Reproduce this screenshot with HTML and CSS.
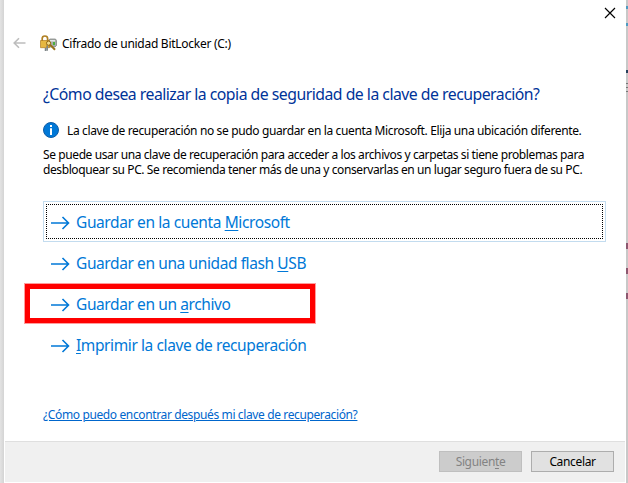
FILE: index.html
```
<!DOCTYPE html>
<html lang="es">
<head>
<meta charset="utf-8">
<title>Cifrado de unidad BitLocker (C:)</title>
<link rel="stylesheet" href="styles.css">
</head>
<body>
<main class="dialog">
  <header class="titlebar">
    <svg class="back" width="13" height="12" viewBox="0 0 13 12"><path d="M12.5 6H1.5M6 1.2 1.2 6 6 10.8" fill="none" stroke="#bdbdbd" stroke-width="1.6"/></svg>
    <svg class="lock" width="17" height="17" viewBox="0 0 17 17">
      <path d="M8 5.5 10 4h5.5l1 1.5v5L15 12H8z" fill="#a9adaa" stroke="#777c79" stroke-width=".7"/>
      <path d="M10 5h5v1.5h-5z" fill="#e2e5e4"/><path d="M13 7h2v3h-2z" fill="#4cae3e"/>
      <path d="M2.2 6V3.6Q2.2 1 4.9 1t2.7 2.6V6" fill="none" stroke="#b08125" stroke-width="1.7"/>
      <path d="M.5 5.5h9v7.2h-9z" fill="#dda72c" stroke="#a97315" stroke-width=".6"/>
      <path d="M1 7h7M1 9h5M1 11h5" stroke="#f6cf62" stroke-width=".8"/>
      <circle cx="8.6" cy="8.2" r="2.1" fill="#f4dc8a" stroke="#926613"/>
      <path d="m10 9.6 5 5.2" stroke="#987017" stroke-width="2"/>
      <path d="M7.2 10.5v5.3M5.5 13v3" stroke="#7d8587" stroke-width="1.5"/>
    </svg>
    <span class="title">Cifrado de unidad BitLocker (C:)</span>
    <svg class="close" width="12" height="12" viewBox="0 0 12 12"><path d="m1 1 10 10M11 1 1 11" stroke="#000" stroke-width="1.15"/></svg>
  </header>
  <section class="content">
    <h1>¿Cómo desea realizar la copia de seguridad de la clave de recuperación?</h1>
    <div class="notice">
      <svg width="16" height="16" viewBox="0 0 16 16"><circle cx="8" cy="8" r="7.5" fill="#0078d7" stroke="#0f5ca5"/><path d="M7 3h2v2H7zM7 6.2h2V13H7z" fill="#fff"/></svg>
      <span>La clave de recuperación no se pudo guardar en la cuenta Microsoft. Elija una ubicación diferente.</span>
    </div>
    <p class="description">Se puede usar una clave de recuperación para acceder a los archivos y carpetas si tiene problemas para<br>desbloquear su PC. Se recomienda tener más de una y conservarlas en un lugar seguro fuera de su PC.</p>
    <nav class="options">
      <a class="option focused"><svg class="arrow" width="19" height="14" viewBox="0 0 19 14"><path d="M0 7h18M11.5 1 17.5 7l-6 6" /></svg><span>Guardar en la cuenta <u>M</u>icrosoft</span></a>
      <a class="option"><svg class="arrow" width="19" height="14" viewBox="0 0 19 14"><path d="M0 7h18M11.5 1 17.5 7l-6 6" /></svg><span>Guardar en una unidad flash <u>U</u>SB</span></a>
      <a class="option marked"><svg class="arrow" width="19" height="14" viewBox="0 0 19 14"><path d="M0 7h18M11.5 1 17.5 7l-6 6" /></svg><span>Guardar en un <u>a</u>rchivo</span></a>
      <a class="option"><svg class="arrow" width="19" height="14" viewBox="0 0 19 14"><path d="M0 7h18M11.5 1 17.5 7l-6 6" /></svg><span><u>I</u>mprimir la clave de recuperación</span></a>
    </nav>
    <a class="help">¿Cómo puedo encontrar después mi clave de recuperación?</a>
  </section>
  <footer>
    <button class="next" disabled><span>Siguien<u>t</u>e</span></button>
    <button><span>Cancelar</span></button>
  </footer>
</main>
<aside class="behind"><i></i><i></i><i></i><i></i><i></i><i></i><i></i></aside>
</body>
</html>
```
FILE: styles.css
```
*, *::before, *::after { box-sizing: border-box; }
body {
  margin: 0;
  width: 628px;
  height: 483px;
  overflow: hidden;
  display: flex;
  padding-left: 4px;
  background: linear-gradient(90deg, #e3e3e3, #d4d4d4 4px, #c8c8c8 5px);
  font-family: "Noto Sans", "Open Sans", sans-serif;
  font-size: 12px;
  color: #000;
  white-space: nowrap;
}
.dialog {
  width: 622px;
  height: 483px;
  display: flex;
  flex-direction: column;
  background: #fff;
}
.titlebar {
  height: 74px;
  display: flex;
  align-items: flex-start;
  padding: 7px 10px 0 9px;
}
.back { margin-top: 30px; }
.lock { margin: 28px 0 0 14px; }
.title { margin: 28px 0 0 5px; line-height: 17px; letter-spacing: -.275px; }
.close { margin-left: auto; }
.content { height: 367px; padding-left: 39px; }
h1 {
  margin: 7px 0 0;
  font-size: 15.8px;
  line-height: 26px;
  font-weight: 400;
  letter-spacing: -.51px;
  color: #003399;
}
.notice {
  margin-top: 15px;
  height: 16px;
  display: flex;
  align-items: center;
  gap: 8px;
  letter-spacing: -.36px;
}
.description { margin: 9px 0 0; line-height: 15px; letter-spacing: -.4px; }
.options { margin-top: 24px; width: 563px; }
.option {
  height: 41px;
  display: flex;
  align-items: center;
  padding-left: 8px;
  position: relative;
  color: #0078d7;
  font-size: 15.5px;
  letter-spacing: -.4px;
}
.option span { margin-left: 6px; line-height: 22px; }
.arrow { margin-top: 2px; fill: none; stroke: #0078d7; stroke-width: 1.6; }
u { text-decoration-thickness: 1px; text-underline-offset: 2px; }
.focused { border: 1px solid #c3dcef; padding-left: 7px; }
.focused::before { content: ""; position: absolute; inset: 2px; border: 1px dotted #000; }
.marked::after {
  content: "";
  position: absolute;
  left: -19px;
  top: 0;
  width: 292px;
  height: 41px;
  border: 6px solid #f00;
  outline: 1px solid #ff9c9c;
  outline-offset: -1px;
}
.help {
  display: inline-block;
  margin-top: 41px;
  line-height: 18px;
  color: #0066cc;
  letter-spacing: -.375px;
  text-decoration: underline;
  text-decoration-thickness: 1px;
  text-underline-offset: 1px;
}
footer {
  height: 41px;
  margin: 0 1px 1px;
  border-top: 1px solid #dfdfdf;
  background: #f0f0f0;
  display: flex;
  justify-content: flex-end;
  align-items: flex-start;
  gap: 9px;
  padding: 9px 11px 0 0;
}
button {
  width: 83px;
  height: 21px;
  padding: 0;
  border: 1px solid #adadad;
  background: #e1e1e1;
  color: #000;
  font: 12px/17px "Noto Sans", sans-serif;
  letter-spacing: -.35px;
}
.next { border-color: #bfbfbf; background: #ccc; color: #838383; }
.behind { width: 2px; display: flex; flex-direction: column; }
.behind i { width: 2px; height: 3px; flex: none; background: #63859a; }
.behind i:nth-child(1) { margin-top: 6px; background: #4d9bc2; }
.behind i:nth-child(2) { margin-top: 14px; background: #4d9bc2; }
.behind i:nth-child(3) { margin-top: 44px; background: #26405c; }
.behind i:nth-child(4) { margin-top: 10px; height: 9px; background: repeating-linear-gradient(#777 0 1px, #c8c8c8 1px 4px); }
.behind i:nth-child(5) { margin-top: 151px; height: 6px; background: #8c5870; }
.behind i:nth-child(6) { margin-top: 19px; height: 6px; background: #8c5870; }
.behind i:nth-child(7) { margin-top: 19px; height: 6px; background: #8c5870; }
```
